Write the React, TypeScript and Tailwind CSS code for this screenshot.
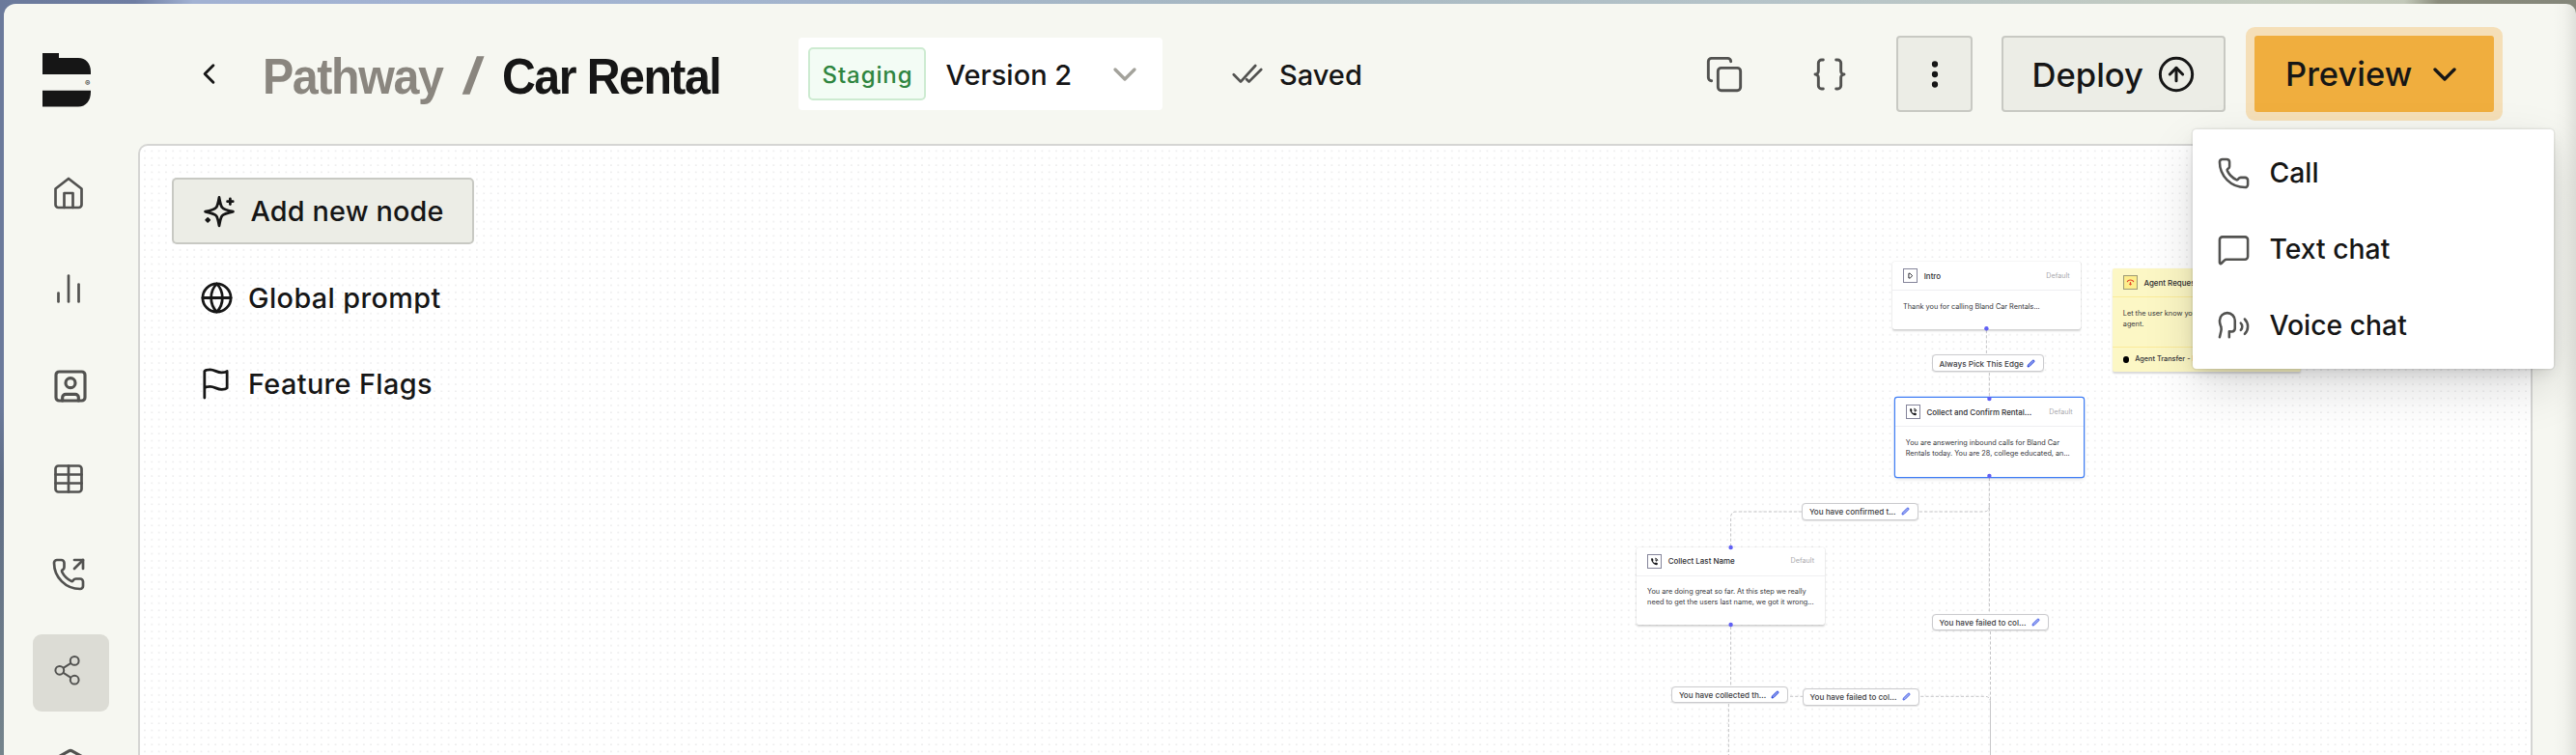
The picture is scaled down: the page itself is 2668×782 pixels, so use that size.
import type { ReactNode } from "react";
import {
  Box,
  Braces,
  ChartNoAxesColumn,
  ChevronDown,
  ChevronLeft,
  CircleArrowUp,
  Copy,
  EllipsisVertical,
  Globe,
  MessageSquare,
  Phone,
  PhoneOutgoing,
  Speech,
  SquareUser,
  Table,
} from "lucide-react";

/* ---------- small drawings ---------- */

function Logo() {
  return (
    <div className="relative h-[56px] w-[51px]">
      <svg width="51" height="56" viewBox="0 0 51 56" fill="#161616">
        <path d="M0 0H17V5H37C45 5 50 11 50 19V22H0Z" />
        <path d="M0 38.8H50V40.5C50 49 45 55.6 37 55.6H0Z" />
      </svg>
      <span className="absolute left-[44px] top-[25.5px] text-[8px] leading-[10px] text-[#161616]">®</span>
    </div>
  );
}

function HomeIcon() {
  return (
    <svg width="36" height="36" viewBox="0 0 24 24" fill="none" stroke="currentColor" strokeWidth="1.8" strokeLinejoin="round" strokeLinecap="round">
      <path d="m3 9 9-7 9 7v11a2 2 0 0 1-2 2H5a2 2 0 0 1-2-2z" />
      <path d="M9 22V12h6v10" />
    </svg>
  );
}

function NodesIcon() {
  return (
    <svg width="36" height="36" viewBox="0 0 36 36" fill="none" stroke="currentColor" strokeWidth="2">
      <circle cx="24.2" cy="8.4" r="4.4" />
      <circle cx="8.8" cy="18.3" r="4.4" />
      <circle cx="24.2" cy="28.2" r="4.4" />
      <path d="M12.6 15.8 20.4 10.8M12.6 20.8 20.4 25.8" />
    </svg>
  );
}

function SparkleIcon() {
  return (
    <svg width="34" height="34" viewBox="0 0 34 34" fill="none" stroke="currentColor" strokeWidth="2.8" strokeLinejoin="round" strokeLinecap="round">
      <path d="M17 2.4C18 8 18.6 11 20 12.8C21.6 15 25 15.9 31.4 17.2C25 18.6 21.6 19.3 20 21.5C18.6 23.4 18 26.2 17 31.8C16 26.2 15.4 23.4 14 21.5C12.4 19.3 9 18.6 2.6 17.2C9 15.9 12.4 15 14 12.8C15.4 11 16 8 17 2.4Z" />
      <path d="M28.4 3.9V9.5M25.6 6.7H31.2" />
      <path fill="currentColor" strokeWidth="1.6" d="M5.2 23.8 7.3 25.9 5.2 28 3.1 25.9Z" />
    </svg>
  );
}

function FlagIcon() {
  return (
    <svg width="35" height="35" viewBox="0 0 24 24" fill="none" stroke="currentColor" strokeWidth="1.9" strokeLinejoin="round" strokeLinecap="round">
      <path d="M4 15s1-1 4-1 5 2 8 2 4-1 4-1V3s-1 1-4 1-5-2-8-2-4 1-4 1zM4 22v-7" />
    </svg>
  );
}

function DoubleCheck() {
  return (
    <svg width="32" height="21" viewBox="0 0 32 21" fill="none" stroke="#525250" strokeWidth="2.7" strokeLinejoin="round" strokeLinecap="round">
      <path d="M1.8 11.3 9 18.6 24.2 2M15.2 16.2 17.6 18.6 30.2 6" />
    </svg>
  );
}

function Pencil({ dark }: { dark?: boolean }) {
  return (
    <svg width="9" height="9" viewBox="0 0 9 9" fill={dark ? "#8fa0f2" : "#9dacf5"} stroke={dark ? "#2440d8" : "#4b63e6"} strokeWidth="1" strokeLinejoin="round">
      <path d="M1 8 1.4 6.1 6.3 1.2Q7 .7 7.7 1.3 8.3 2 7.8 2.7L2.9 7.6Z" />
    </svg>
  );
}

/* ---------- sidebar ---------- */

function NavItem({ active, children }: { active?: boolean; children: ReactNode }) {
  return (
    <div
      className={
        active
          ? "h-[79.7px] w-[79px] shrink-0 rounded-[9px] bg-[#dcdcd5] pl-[19px] pt-[18.5px]"
          : "h-[79.7px] w-[79px] shrink-0 rounded-[9px] pl-[19px] pt-[18.5px]"
      }
    >
      {children}
    </div>
  );
}

function Sidebar() {
  return (
    <nav className="flex w-[139px] shrink-0 flex-col overflow-hidden text-[#525250]">
      <div className="h-[159.7px] shrink-0 pl-[40px] pt-[51px]">
        <Logo />
      </div>
      <div className="flex flex-col gap-[19px] pl-[30px]">
        <NavItem><HomeIcon /></NavItem>
        <NavItem><ChartNoAxesColumn size={36} strokeWidth={1.8} /></NavItem>
        <NavItem><SquareUser size={40} strokeWidth={1.9} /></NavItem>
        <NavItem><Table size={36} strokeWidth={1.8} /></NavItem>
        <NavItem><PhoneOutgoing size={36} strokeWidth={1.8} /></NavItem>
        <NavItem active><NodesIcon /></NavItem>
        <NavItem><Box size={40} strokeWidth={1.9} /></NavItem>
      </div>
    </nav>
  );
}

/* ---------- header ---------- */

function MenuRow({ icon, label }: { icon: ReactNode; label: string }) {
  return (
    <div className="flex h-[79px] items-center gap-[20px] pl-[25px]">
      {icon}
      <span className="text-[28.3px] font-medium leading-[40px] text-[#161616]">{label}</span>
    </div>
  );
}

function PreviewMenu() {
  return (
    <div className="absolute -left-[64.5px] top-[96.5px] z-20 w-[374px] rounded-[4px] bg-white pb-[5px] pt-[6px] text-[#525250] shadow-[0_0_0_1.5px_rgba(22,22,10,0.06),0_20px_50px_-4px_rgba(0,0,0,0.16),0_6px_16px_-4px_rgba(0,0,0,0.14)]">
      <MenuRow icon={<Phone size={35} strokeWidth={1.75} />} label="Call" />
      <MenuRow icon={<MessageSquare size={35} strokeWidth={1.75} />} label="Text chat" />
      <MenuRow icon={<Speech size={35} strokeWidth={1.75} />} label="Voice chat" />
    </div>
  );
}

function Header() {
  return (
    <header className="relative z-10 flex h-[145px] shrink-0 items-center text-[#161616]">
      <ChevronLeft size={35} strokeWidth={2} className="ml-[56px] shrink-0" />
      <h1 className="ml-[38px] flex shrink-0 pt-[4px] text-[52px] font-bold leading-[60px] font-['Liberation_Sans',sans-serif]">
        <span className="w-[208px]">
          <span className="inline-block origin-left scale-x-[0.93] whitespace-nowrap tracking-[-1.5px] text-[#8a867f]">Pathway</span>
        </span>
        <span className="w-[40px] text-[#8a867f]">
          <span className="inline-block origin-left scale-x-[1.4] font-normal [-webkit-text-stroke:1.4px_#8a867f]">/</span>
        </span>
        <span className="w-[307px]">
          <span className="inline-block origin-left scale-x-[0.93] whitespace-nowrap tracking-[-1.7px]">Car Rental</span>
        </span>
      </h1>
      <div className="flex h-[75px] w-[377px] shrink-0 items-center rounded-[4px] bg-white pl-[10px]">
        <span className="flex h-[55px] w-[122px] items-center justify-center rounded-[5px] border-2 border-[#cdebd1] bg-[#f3fcf5] pl-[1px] pt-[2px] text-[24px] font-medium tracking-[0.9px] text-[#2f8540]">
          Staging
        </span>
        <span className="ml-[20.5px] w-[165px] pt-[2px] text-[29px] font-medium leading-[40px]">Version 2</span>
        <ChevronDown size={40} strokeWidth={2} className="text-[#a3a29b]" />
      </div>
      <div className="ml-[72px] flex shrink-0 items-center gap-[17px]">
        <DoubleCheck />
        <span className="pt-[2px] text-[29px] font-medium leading-[40px]">Saved</span>
      </div>
      <div className="ml-auto flex shrink-0 items-center pr-[85px]">
        <Copy size={40} strokeWidth={1.75} className="text-[#525250]" />
        <Braces size={40} strokeWidth={1.75} className="ml-[69px] text-[#525250]" />
        <div className="ml-[49px] flex h-[79px] w-[79px] items-center justify-center rounded-[4px] border-2 border-[#c8c9c3] bg-[#ecede6]">
          <EllipsisVertical size={36} strokeWidth={2.2} />
        </div>
        <div className="ml-[30px] flex h-[79px] w-[232px] items-center rounded-[4px] border-2 border-[#c8c9c3] bg-[#ecede6] pl-[29.5px]">
          <span className="w-[129.5px] text-[34.6px] font-medium leading-[44px]">Deploy</span>
          <CircleArrowUp size={40} strokeWidth={1.8} className="-ml-[0.5px]" />
        </div>
        <div className="relative ml-[30px] flex h-[79px] w-[248px] items-center rounded-[3px] bg-[#f0ae3e] pl-[32px] shadow-[0_0_0_9px_#f5dfb8]">
          <span className="w-[144.5px] text-[34.5px] font-medium leading-[44px]">Preview</span>
          <ChevronDown size={40} strokeWidth={2} />
          <PreviewMenu />
        </div>
      </div>
    </header>
  );
}

/* ---------- flow canvas ---------- */

type Tone = "default" | "active" | "agent";

type NodeData = {
  x: number;
  y: number;
  h: number;
  w: number;
  tone: Tone;
  icon: "play" | "phone" | "agent";
  title: string;
  lines: string[];
  footer?: string;
};

const NODES: NodeData[] = [
  { x: 1960, y: 271, w: 195, h: 69.5, tone: "default", icon: "play", title: "Intro", lines: ["Thank you for calling Bland Car Rentals..."] },
  { x: 2187.7, y: 278, w: 195.3, h: 106.7, tone: "agent", icon: "agent", title: "Agent Request...", lines: ["Let the user know you are getting an", "agent."], footer: "Agent Transfer - Human" },
  { x: 1962.7, y: 412.4, w: 195.3, h: 81.2, tone: "active", icon: "phone", title: "Collect and Confirm Rental...", lines: ["You are answering inbound calls for Bland Car", "Rentals today. You are 28, college educated, an..."] },
  { x: 1695, y: 566.7, w: 195.3, h: 80.3, tone: "default", icon: "phone", title: "Collect Last Name", lines: ["You are doing great so far. At this step we really", "need to get the users last name, we got it wrong..."] },
];

const SHELL: Record<Tone, string> = {
  default: "bg-white shadow-[0_0_1.5px_rgba(0,0,0,0.14),0_1.5px_2px_rgba(0,0,0,0.16)]",
  active: "bg-white shadow-[0_0_0_1.2px_#3f7df5,0_2px_4px_rgba(0,0,0,0.14)]",
  agent: "bg-[#fcf7c5] shadow-[0_1.5px_2px_rgba(0,0,0,0.16)]",
};

function NodeGlyph({ kind }: { kind: NodeData["icon"] }) {
  if (kind === "play") {
    return (
      <svg width="15" height="15" viewBox="0 0 15 15" fill="none" stroke="#2c2c33" strokeWidth="1">
        <rect x="0.5" y="0.5" width="14" height="14" stroke="#85859b" />
        <path d="M5.9 5.2H7.2L9.7 7.7 7.2 10H5.9Z" />
      </svg>
    );
  }
  if (kind === "agent") {
    return (
      <svg width="15" height="15" viewBox="0 0 15 15" fill="none" stroke="#e5482d" strokeWidth="1.1">
        <rect x="0.5" y="0.5" width="14" height="14" fill="#fdee8c" stroke="#9f9c78" />
        <path d="M4.2 7.2Q4.6 5 7.5 5T10.8 7.2M7.5 7V10M6.4 8.9 7.5 10 8.6 8.9" />
      </svg>
    );
  }
  return (
    <svg width="15" height="15" viewBox="0 0 15 15" fill="none">
      <rect x="0.5" y="0.5" width="14" height="14" stroke="#85859b" />
      <path fill="#18181b" d="M4 4.6 5.7 4.2 6.6 6.2 5.8 7Q6.4 8.5 8 9.3L8.8 8.5 10.9 9.3 10.6 11Q8.5 11.6 6.2 9.4 3.7 7 4 4.6Z" />
      <path d="M8.2 4.2A3 3 0 0 1 10.9 6.9M8 6H9.6V7.6" stroke="#18181b" strokeWidth="0.9" />
    </svg>
  );
}

function FlowNode({ n }: { n: NodeData }) {
  const agent = n.tone === "agent";
  return (
    <div className={`absolute flex flex-col rounded-[2px] ${SHELL[n.tone]}`} style={{ left: n.x, top: n.y, width: n.w, height: n.h }}>
      <div className={`flex h-[30px] shrink-0 items-center border-b px-[11.3px] ${agent ? "border-[#fbeb9a]" : "border-[#efeff1]"}`}>
        <NodeGlyph kind={n.icon} />
        <span className="ml-[6.4px] whitespace-nowrap text-[7.95px] font-medium leading-[12px] text-[#2c2c30]">{n.title}</span>
        {!agent && <span className="ml-auto text-[7.2px] leading-[12px] text-[#a9a9ad]">Default</span>}
      </div>
      <div className="grow px-[11.1px] pt-[10.8px] text-[7.31px] leading-[11px] text-[#35353a]">
        {n.lines.map((l) => (
          <p key={l} className="whitespace-nowrap">{l}</p>
        ))}
      </div>
      {n.footer && (
        <div className="flex h-[26px] shrink-0 items-center gap-[5.8px] border-t border-[#fbeb9a] px-[11px]">
          <span className="h-[6.7px] w-[6.7px] rounded-full bg-black" />
          <span className="whitespace-nowrap text-[7.31px] font-medium text-[#35353a]">{n.footer}</span>
        </div>
      )}
    </div>
  );
}

const LABELS: { x: number; y: number; w: number; text: string; dark?: boolean }[] = [
  { x: 2001, y: 367.2, w: 115.7, text: "Always Pick This Edge", dark: true },
  { x: 1866.3, y: 521, w: 120.5, text: "You have confirmed t..." },
  { x: 2001, y: 635.7, w: 120.5, text: "You have failed to col..." },
  { x: 1731.3, y: 710.5, w: 120.5, text: "You have collected th...", dark: true },
  { x: 1867, y: 713, w: 120.5, text: "You have failed to col..." },
];

const HANDLES: [number, number][] = [
  [2057.4, 340.2],
  [2060.4, 413],
  [2060.4, 493],
  [1792.6, 567],
  [1792.6, 647],
];

function Canvas() {
  return (
    <main className="relative h-full w-[2480px] shrink-0 overflow-hidden rounded-tl-[10px] border-2 border-b-0 border-[#d5d5d3] bg-white">
      <div className="absolute -left-[145px] -top-[151px] h-[782px] w-[2668px]">
        <svg className="absolute inset-0" width="2668" height="782" fill="none">
          <defs>
            <pattern id="dots" x="160.95" y="160" width="7.318" height="7.318" patternUnits="userSpaceOnUse">
              <circle cx="3.659" cy="3.659" r="0.52" fill="#b8b8ba" />
            </pattern>
          </defs>
          <rect width="2668" height="782" fill="url(#dots)" />
          <g stroke="#bebec1" strokeWidth="0.9" strokeDasharray="3.2 2">
            <path d="M2057.4 342V367" />
            <path d="M2060.4 386V412" />
            <path d="M2060.4 495V635" />
            <path d="M2060.4 524Q2060.4 530 2054.4 530H1798.6Q1792.6 530 1792.6 536V566" />
            <path d="M1792.6 649V711" />
            <path d="M1790.4 729V782" />
            <path d="M2061.5 654V727" />
            <path d="M1854 721.3H2055.5Q2061.5 721.3 2061.5 727.3" />
          </g>
          <path d="M2061.5 727V782" stroke="#c8c8ca" strokeWidth="1" />
        </svg>
        {NODES.map((n) => (
          <FlowNode key={n.title} n={n} />
        ))}
        {LABELS.map((l) => (
          <div
            key={`${l.x}-${l.y}`}
            className="absolute flex h-[17.7px] items-center justify-between rounded-[4px] border border-[#cbcbce] bg-white pl-[6.6px] pr-[7.5px] text-[8.1px] font-medium leading-[12px] text-[#3c3c42] shadow-[0_0.5px_1px_rgba(0,0,0,0.1)]"
            style={{ left: l.x, top: l.y, width: l.w }}
          >
            <span className="whitespace-nowrap pt-[1px]">{l.text}</span>
            <Pencil dark={l.dark} />
          </div>
        ))}
        <svg className="absolute inset-0" width="2668" height="782" fill="#6060f5">
          {HANDLES.map(([x, y]) => (
            <circle key={`${x}-${y}`} cx={x} cy={y} r="2.2" />
          ))}
        </svg>
      </div>
      <div className="relative flex flex-col items-start pl-[33px] pt-[33px] text-[28.8px] font-medium leading-[40px] tracking-[0.3px] text-[#161616]">
        <div className="flex h-[69px] w-[313px] items-center gap-[16px] rounded-[5px] border-2 border-[#c8c9c3] bg-[#ecede6] pl-[29.5px]">
          <SparkleIcon />
          <span className="whitespace-nowrap pt-[1px] tracking-[0.15px]">Add new node</span>
        </div>
        <div className="flex h-[89px] items-center gap-[15px] pl-[29px] pt-[21px]">
          <Globe size={35} strokeWidth={1.9} />
          <span className="pt-[1px] tracking-[0.4px]">Global prompt</span>
        </div>
        <div className="flex h-[89px] items-center gap-[16px] pl-[28px] pt-[22px]">
          <FlagIcon />
          <span className="pt-[1px] tracking-[0.4px]">Feature Flags</span>
        </div>
      </div>
    </main>
  );
}

export default function App() {
  return (
    <div className="h-[782px] w-[2668px] overflow-hidden bg-[linear-gradient(90deg,#6b7a9b_0px,#6f7ea3_140px,#a2b2d3_200px,#a3b4d0_700px,#a7b8c2_1300px,#b6c4c9_1850px,#c6cdbf_2380px,#c2c8b9_2490px,#8b8d7d_2525px,#84867a_2668px)] font-['Inter',sans-serif]">
      <div className="flex h-full bg-[linear-gradient(180deg,transparent_4px,#6b7a9b_4px,#6b7a9b_420px,#5f6d85_500px,#75848c_782px)] bg-[length:4px_100%] bg-no-repeat pl-[4px] pt-[4px]">
        <div className="relative flex h-[778px] w-[2664px] overflow-hidden rounded-tl-[12px] rounded-tr-[10px] bg-[#f6f7f1]">
          <Sidebar />
          <div className="flex min-w-0 grow flex-col">
            <Header />
            <div className="min-h-0 grow">
              <Canvas />
            </div>
          </div>
          <div className="absolute right-0 top-0 h-full w-[24px] bg-[linear-gradient(90deg,transparent,rgba(0,0,0,0.02)_50%,rgba(0,0,0,0.09))]" />
        </div>
      </div>
    </div>
  );
}
